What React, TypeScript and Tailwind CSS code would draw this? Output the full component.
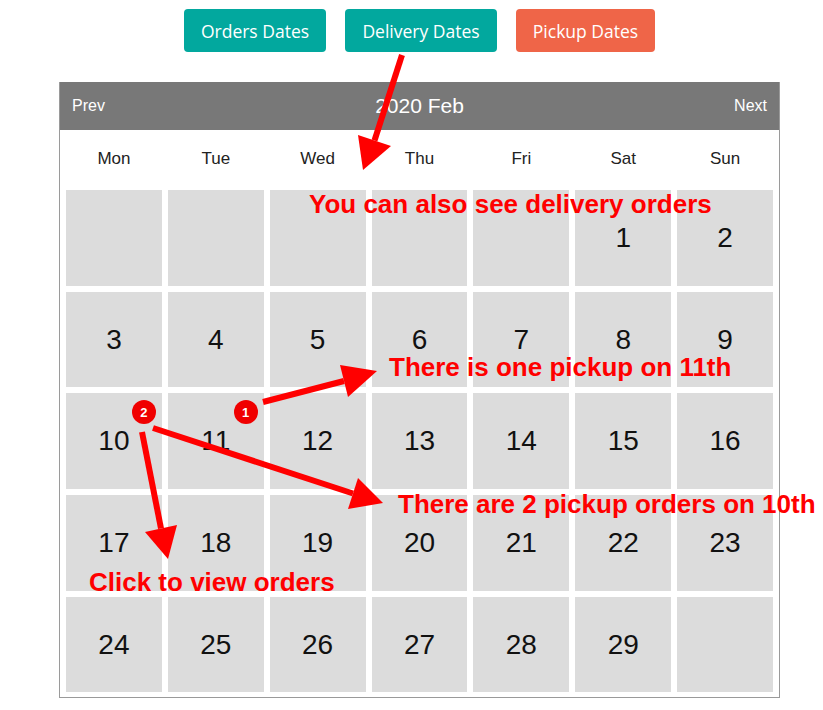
import React from "react";

const days = ["Mon", "Tue", "Wed", "Thu", "Fri", "Sat", "Sun"];
const cells: (number | null)[] = [
  null, null, null, null, null, 1, 2,
  3, 4, 5, 6, 7, 8, 9,
  10, 11, 12, 13, 14, 15, 16,
  17, 18, 19, 20, 21, 22, 23,
  24, 25, 26, 27, 28, 29, null,
];
const badges: Record<number, number> = { 10: 2, 11: 1 };

function Arrow({ x1, y1, x2, y2, c1, c2, tip }: { x1: number; y1: number; x2: number; y2: number; c1: [number, number]; c2: [number, number]; tip: [number, number] }) {
  return (
    <g>
      <line x1={x1} y1={y1} x2={x2} y2={y2} stroke="#ff0000" strokeWidth={6} />
      <polygon points={`${c1[0]},${c1[1]} ${c2[0]},${c2[1]} ${tip[0]},${tip[1]}`} fill="#ff0000" />
    </g>
  );
}

export default function App() {
  return (
    <div className="relative w-[823px] h-[710px] bg-white overflow-hidden font-['Liberation_Sans',Arial,sans-serif]">
      <div className="ml-[59px] w-[721px] pt-[9px]">
        <div className="flex justify-center gap-[19px] font-['Open_Sans','Noto_Sans',sans-serif] text-[17.5px] text-white">
          <button className="w-[142px] h-[43px] rounded-[4px] bg-[#02a89e] flex items-center justify-center pt-[1px]">Orders Dates</button>
          <button className="w-[152px] h-[43px] rounded-[4px] bg-[#02a89e] flex items-center justify-center pt-[1px]">Delivery Dates</button>
          <button className="w-[139px] h-[43px] rounded-[4px] bg-[#ef6548] flex items-center justify-center pt-[1px]">Pickup Dates</button>
        </div>
        <div className="mt-[30px] border border-t-0 border-[#9a9a9a]">
          <div className="h-[48px] bg-[#787878] text-white flex items-center justify-between px-[12px] relative">
            <span className="text-[16px]">Prev</span>
            <span className="absolute left-0 right-0 text-center text-[21px] pointer-events-none">2020 Feb</span>
            <span className="text-[16px]">Next</span>
          </div>
          <div className="p-[6px] pb-[5px]">
            <div className="grid grid-cols-7 gap-[6px]">
              {days.map((d) => (
                <div key={d} className="h-[48px] flex items-center justify-center text-[17px] text-[#222] pb-[2px]">{d}</div>
              ))}
              {cells.map((n, i) => (
                <div key={i} className="relative h-[95.7px] bg-[#dcdcdc] flex items-center justify-center text-[28px] text-[#111]">
                  {n}
                  {n !== null && badges[n] !== undefined && (
                    <span className="absolute top-[7px] right-[6px] w-[24px] h-[24px] rounded-full bg-[#f00000] text-white text-[13px] font-bold flex items-center justify-center">
                      {badges[n]}
                    </span>
                  )}
                </div>
              ))}
            </div>
          </div>
        </div>
      </div>

      <svg className="absolute inset-0 pointer-events-none" width={823} height={710}>
        <Arrow x1={402} y1={55} x2={374.5} y2={140.5} c1={[358, 135]} c2={[391, 146]} tip={[363, 170]} />
        <Arrow x1={263} y1={402} x2={344} y2={381} c1={[340, 365]} c2={[348, 397]} tip={[377, 371]} />
        <Arrow x1={153} y1={428} x2={353} y2={493.5} c1={[358, 478]} c2={[348, 509]} tip={[383, 503]} />
        <Arrow x1={142} y1={432} x2={161} y2={528.5} c1={[145, 532]} c2={[177, 525]} tip={[168, 559]} />
      </svg>

      <div className="absolute left-[309px] top-[191px] text-[26px] leading-none font-bold text-[#ff0000] whitespace-nowrap">You can also see delivery orders</div>
      <div className="absolute left-[389px] top-[354px] text-[26px] leading-none font-bold text-[#ff0000] whitespace-nowrap">There is one pickup on 11th</div>
      <div className="absolute left-[398px] top-[491px] text-[26px] leading-none font-bold text-[#ff0000] whitespace-nowrap">There are 2 pickup orders on 10th</div>
      <div className="absolute left-[89px] top-[569px] text-[26px] leading-none font-bold text-[#ff0000] whitespace-nowrap">Click to view orders</div>
    </div>
  );
}
